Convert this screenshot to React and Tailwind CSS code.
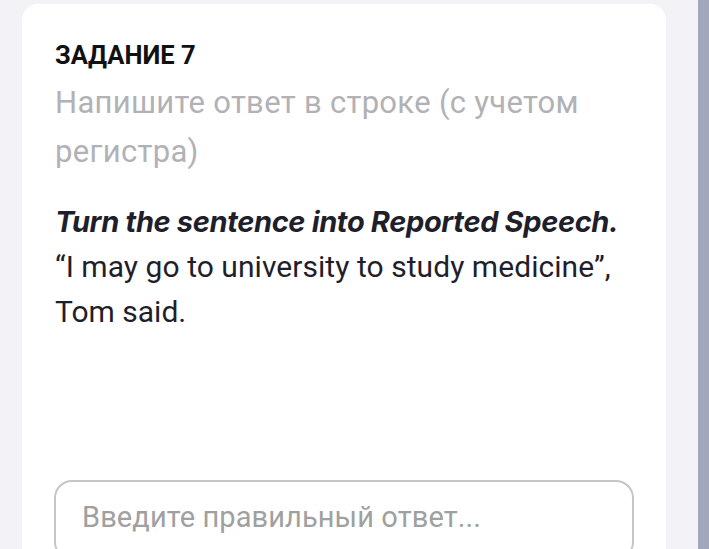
export default function App() {
  return (
    <div className="flex h-[549px] w-[709px] overflow-hidden bg-[#f2f2f7] font-['Roboto',sans-serif]">
      <div className="flex-1 pl-[22px] pt-[4px] pr-[32px]">
        <div className="h-[600px] rounded-[16px] bg-white px-[32px] pt-[36px]">
          <div className="pl-[1px] text-[25.5px] font-bold leading-[30px] text-[#111]">ЗАДАНИЕ 7</div>
          <p className="mt-[8px] pl-[1px] text-[31px] leading-[49px] tracking-[0.3px] text-[#b1b1b6]">
            Напишите ответ в строке (с учетом регистра)
          </p>
          <div className="mt-[23px] pl-[1px] text-[30px] leading-[45px] text-[#1f1f2b]">
            <div className="font-['Inter',sans-serif] text-[29px] font-bold italic tracking-[-0.35px]">Turn the sentence into Reported Speech.</div>
            <div className="tracking-[0.05px]">“I may go to university to study medicine”,</div>
            <div>Tom said.</div>
          </div>
          <div className="mt-[146px] h-[80px] rounded-[18px] border-2 border-[#c6c6c8] px-[26px] pt-[15px] text-[29px] leading-[40px] tracking-[0.1px] text-[#a0a0a0]">
            Введите правильный ответ...
          </div>
        </div>
      </div>
      <div className="w-[11px] bg-[#a3a7bb]" />
    </div>
  );
}
